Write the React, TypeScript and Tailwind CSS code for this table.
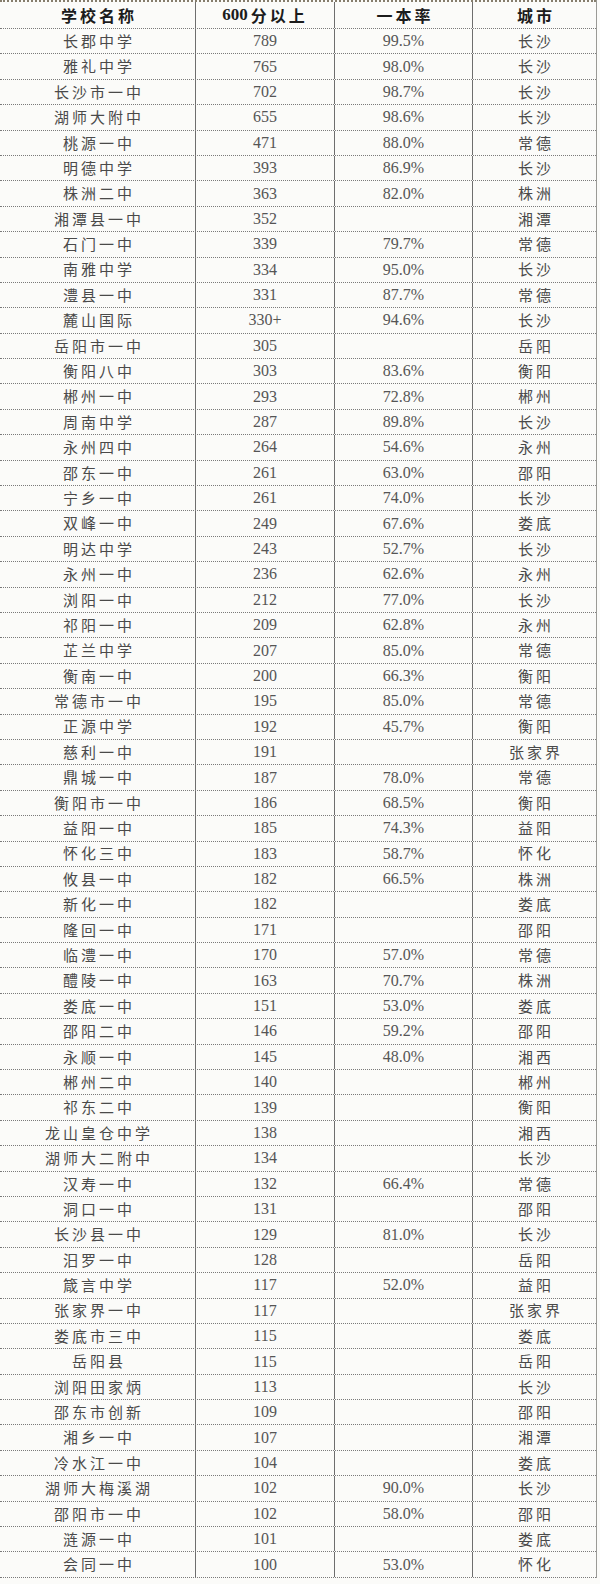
const rows: [string, string, string, string][] = [
  ["长郡中学", "789", "99.5%", "长沙"],
  ["雅礼中学", "765", "98.0%", "长沙"],
  ["长沙市一中", "702", "98.7%", "长沙"],
  ["湖师大附中", "655", "98.6%", "长沙"],
  ["桃源一中", "471", "88.0%", "常德"],
  ["明德中学", "393", "86.9%", "长沙"],
  ["株洲二中", "363", "82.0%", "株洲"],
  ["湘潭县一中", "352", "", "湘潭"],
  ["石门一中", "339", "79.7%", "常德"],
  ["南雅中学", "334", "95.0%", "长沙"],
  ["澧县一中", "331", "87.7%", "常德"],
  ["麓山国际", "330+", "94.6%", "长沙"],
  ["岳阳市一中", "305", "", "岳阳"],
  ["衡阳八中", "303", "83.6%", "衡阳"],
  ["郴州一中", "293", "72.8%", "郴州"],
  ["周南中学", "287", "89.8%", "长沙"],
  ["永州四中", "264", "54.6%", "永州"],
  ["邵东一中", "261", "63.0%", "邵阳"],
  ["宁乡一中", "261", "74.0%", "长沙"],
  ["双峰一中", "249", "67.6%", "娄底"],
  ["明达中学", "243", "52.7%", "长沙"],
  ["永州一中", "236", "62.6%", "永州"],
  ["浏阳一中", "212", "77.0%", "长沙"],
  ["祁阳一中", "209", "62.8%", "永州"],
  ["芷兰中学", "207", "85.0%", "常德"],
  ["衡南一中", "200", "66.3%", "衡阳"],
  ["常德市一中", "195", "85.0%", "常德"],
  ["正源中学", "192", "45.7%", "衡阳"],
  ["慈利一中", "191", "", "张家界"],
  ["鼎城一中", "187", "78.0%", "常德"],
  ["衡阳市一中", "186", "68.5%", "衡阳"],
  ["益阳一中", "185", "74.3%", "益阳"],
  ["怀化三中", "183", "58.7%", "怀化"],
  ["攸县一中", "182", "66.5%", "株洲"],
  ["新化一中", "182", "", "娄底"],
  ["隆回一中", "171", "", "邵阳"],
  ["临澧一中", "170", "57.0%", "常德"],
  ["醴陵一中", "163", "70.7%", "株洲"],
  ["娄底一中", "151", "53.0%", "娄底"],
  ["邵阳二中", "146", "59.2%", "邵阳"],
  ["永顺一中", "145", "48.0%", "湘西"],
  ["郴州二中", "140", "", "郴州"],
  ["祁东二中", "139", "", "衡阳"],
  ["龙山皇仓中学", "138", "", "湘西"],
  ["湖师大二附中", "134", "", "长沙"],
  ["汉寿一中", "132", "66.4%", "常德"],
  ["洞口一中", "131", "", "邵阳"],
  ["长沙县一中", "129", "81.0%", "长沙"],
  ["汨罗一中", "128", "", "岳阳"],
  ["箴言中学", "117", "52.0%", "益阳"],
  ["张家界一中", "117", "", "张家界"],
  ["娄底市三中", "115", "", "娄底"],
  ["岳阳县", "115", "", "岳阳"],
  ["浏阳田家炳", "113", "", "长沙"],
  ["邵东市创新", "109", "", "邵阳"],
  ["湘乡一中", "107", "", "湘潭"],
  ["冷水江一中", "104", "", "娄底"],
  ["湖师大梅溪湖", "102", "90.0%", "长沙"],
  ["邵阳市一中", "102", "58.0%", "邵阳"],
  ["涟源一中", "101", "", "娄底"],
  ["会同一中", "100", "53.0%", "怀化"],
];

const cjk = "font-['Noto_Sans_CJK_SC',sans-serif]";
const serif = "font-['Liberation_Serif','Noto_Sans_CJK_SC',serif]";

export default function App() {
  return (
    <div className="w-[600px] h-[1584px] bg-[#fbfbf9] overflow-hidden">
      <div className="w-[597px] border-r border-[#9a9a96]">
        <div className="flex h-[29px] border-t-2 border-t-[#857d6c] border-b border-dotted border-b-[#7a7a7a] text-[#1c1c1c] font-bold">
          <div className={`w-[195px] flex items-center justify-center pl-[3px] tracking-[3px] text-[16px] ${cjk}`}>学校名称</div>
          <div className="w-[139px] border-l border-l-[#6e6e6e] flex items-center justify-center text-[16px]">
            <span className={`${serif} text-[17px]`}>600</span>
            <span className={`${cjk} tracking-[3px] pl-[3px]`}>分以上</span>
          </div>
          <div className={`w-[138px] border-l border-l-[#6e6e6e] flex items-center justify-center pl-[3px] tracking-[3px] text-[16px] ${cjk}`}>一本率</div>
          <div className={`w-[124px] border-l border-l-[#6e6e6e] flex items-center justify-center pl-[3px] tracking-[3px] text-[16px] ${cjk}`}>城市</div>
        </div>
        {rows.map(([name, score, rate, city]) => (
          <div key={name} className="flex h-[25.4px] border-b border-dotted border-b-[#7a7a7a] text-[#4a4a4a]">
            <div className={`w-[195px] flex items-center justify-center pl-[3px] tracking-[3px] text-[15px] ${cjk}`}>{name}</div>
            <div className={`w-[139px] border-l border-l-[#6e6e6e] flex items-center justify-center text-[16px] text-[#555] ${serif}`}>{score}</div>
            <div className={`w-[138px] border-l border-l-[#6e6e6e] flex items-center justify-center text-[16px] text-[#555] ${serif}`}>{rate}</div>
            <div className={`w-[124px] border-l border-l-[#6e6e6e] flex items-center justify-center pl-[3px] tracking-[3px] text-[15px] ${cjk}`}>{city}</div>
          </div>
        ))}
      </div>
    </div>
  );
}
